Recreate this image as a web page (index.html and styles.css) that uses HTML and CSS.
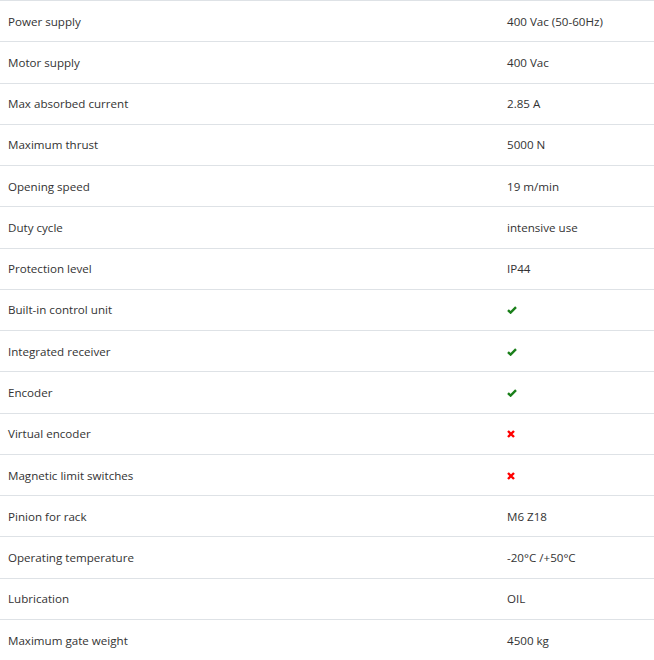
FILE: index.html
```html
<!DOCTYPE html>
<html>
<head>
<meta charset="utf-8">
<link rel="stylesheet" href="styles.css">
</head>
<body>
<div class="specs">
  <div class="row"><div class="label">Power supply</div><div class="value">400 Vac (50-60Hz)</div></div>
  <div class="row"><div class="label">Motor supply</div><div class="value">400 Vac</div></div>
  <div class="row"><div class="label">Max absorbed current</div><div class="value">2.85 A</div></div>
  <div class="row"><div class="label">Maximum thrust</div><div class="value">5000 N</div></div>
  <div class="row"><div class="label">Opening speed</div><div class="value">19 m/min</div></div>
  <div class="row"><div class="label">Duty cycle</div><div class="value">intensive use</div></div>
  <div class="row"><div class="label">Protection level</div><div class="value">IP44</div></div>
  <div class="row"><div class="label">Built-in control unit</div><div class="value"><svg class="icon" width="10" height="8" viewBox="0 0 10 8"><path d="M1 4.2 L3.6 6.6 L9 1.2" fill="none" stroke="#1a7f1a" stroke-width="2.4"/></svg></div></div>
  <div class="row"><div class="label">Integrated receiver</div><div class="value"><svg class="icon" width="10" height="8" viewBox="0 0 10 8"><path d="M1 4.2 L3.6 6.6 L9 1.2" fill="none" stroke="#1a7f1a" stroke-width="2.4"/></svg></div></div>
  <div class="row"><div class="label">Encoder</div><div class="value"><svg class="icon" width="10" height="8" viewBox="0 0 10 8"><path d="M1 4.2 L3.6 6.6 L9 1.2" fill="none" stroke="#1a7f1a" stroke-width="2.4"/></svg></div></div>
  <div class="row"><div class="label">Virtual encoder</div><div class="value"><svg class="icon" width="8" height="8" viewBox="0 0 8 8"><path d="M1 1 L7 7 M7 1 L1 7" fill="none" stroke="#f00" stroke-width="2.4"/></svg></div></div>
  <div class="row"><div class="label">Magnetic limit switches</div><div class="value"><svg class="icon" width="8" height="8" viewBox="0 0 8 8"><path d="M1 1 L7 7 M7 1 L1 7" fill="none" stroke="#f00" stroke-width="2.4"/></svg></div></div>
  <div class="row"><div class="label">Pinion for rack</div><div class="value">M6 Z18</div></div>
  <div class="row"><div class="label">Operating temperature</div><div class="value">-20°C /+50°C</div></div>
  <div class="row"><div class="label">Lubrication</div><div class="value">OIL</div></div>
  <div class="row"><div class="label">Maximum gate weight</div><div class="value">4500 kg</div></div>
</div>
</body>
</html>
```

FILE: styles.css
```css
html, body {
  margin: 0;
  padding: 0;
  background: #fff;
}
body {
  font-family: "Open Sans", "Liberation Sans", sans-serif;
  font-size: 11.6px;
  color: #333;
}
.specs {
  display: flex;
  flex-direction: column;
}
.row {
  display: grid;
  grid-template-columns: 499px 1fr;
  align-items: center;
  height: 41.27px;
  box-sizing: border-box;
  border-top: 1px solid #dee2e6;
  padding-top: 1px;
}
.label, .value {
  padding: 0 8px;
  line-height: 18px;
}
.icon {
  display: block;
}
```
